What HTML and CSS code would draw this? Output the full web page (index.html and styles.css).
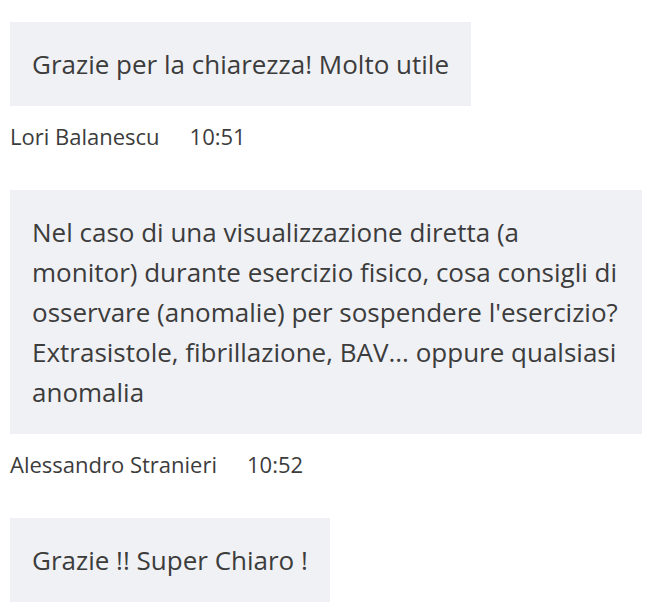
FILE: index.html
```html
<!DOCTYPE html>
<html lang="it">
<head>
<meta charset="utf-8">
<link rel="stylesheet" href="styles.css">
</head>
<body>
<div class="chat">
  <div class="msg">
    <div class="bubble">Grazie per la chiarezza! Molto utile</div>
    <div class="meta"><span class="name">Lori Balanescu</span><span class="time">10:51</span></div>
  </div>
  <div class="msg">
    <div class="bubble">Nel caso di una visualizzazione diretta (a monitor) durante esercizio fisico, cosa consigli di osservare (anomalie) per sospendere l'esercizio? Extrasistole, fibrillazione, BAV... oppure qualsiasi anomalia</div>
    <div class="meta"><span class="name">Alessandro Stranieri</span><span class="time">10:52</span></div>
  </div>
  <div class="msg">
    <div class="bubble">Grazie !! Super Chiaro !</div>
  </div>
</div>
</body>
</html>
```
FILE: styles.css
```css
html, body {
  margin: 0;
  padding: 0;
  background: #ffffff;
}
body {
  font-family: "Open Sans", "DejaVu Sans", sans-serif;
  color: #3c3c3c;
}
.chat {
  padding: 22px 0 0 10px;
  display: flex;
  flex-direction: column;
  align-items: flex-start;
  gap: 39px;
}
.msg {
  display: flex;
  flex-direction: column;
  align-items: flex-start;
}
.bubble {
  background: #f0f1f5;
  padding: 22px 22px;
  font-size: 26px;
  line-height: 40px;
  max-width: 588px;
}
.meta {
  margin-top: 15px;
  font-size: 22px;
  line-height: 30px;
  display: flex;
  gap: 30px;
}
```
